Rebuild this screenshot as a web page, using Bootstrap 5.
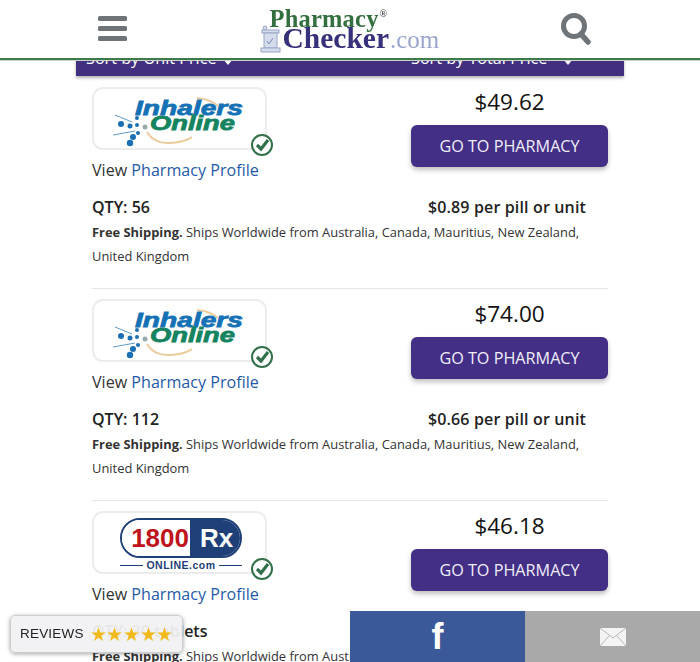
<!DOCTYPE html>
<html lang="en">
<head>
    <meta charset="UTF-8">
    <meta name="viewport" content="width=device-width, initial-scale=1.0">
    <title>PharmacyChecker - Prices</title>
    <link rel="stylesheet" href="https://cdn.jsdelivr.net/npm/bootstrap@5.3.0/dist/css/bootstrap.min.css">
    <style>
        html, body { height: 662px; overflow: hidden; }
        body { font-family: "Open Sans", sans-serif; color: #222; background: #fff; }

        /* Header */
        .pc-header { height: 60px; background: #fff; border-bottom: 2px solid #3f7a4c; box-shadow: 0 1px 0 #c9d3c9; z-index: 20; padding: 0 108px 0 98px; }
        .pc-logo { width: 180px; height: 52px; margin-top: 4px; margin-left: 12px; position: relative; font-family: "Liberation Serif", serif; line-height: 1; }
        .pc-logo-top { position: absolute; left: 10px; top: 3px; font-size: 24.5px; font-weight: 700; color: #34703f; letter-spacing: .2px; white-space: nowrap; }
        .pc-logo-top sup { font-size: 10px; color: #555; top: -10px; position: relative; vertical-align: baseline; margin-left: 1px; }
        .pc-logo-bottom { position: absolute; left: 23px; top: 20px; font-size: 29.5px; font-weight: 700; color: #37307a; white-space: nowrap; }
        .pc-logo-bottom span { font-weight: 400; font-size: 25px; color: #9aa5cd; margin-left: 1px; }
        .pc-mortar { position: absolute; left: 0; top: 21px; }

        /* Sort bar */
        .pc-main { padding-top: 40px; }
        .pc-sort { height: 36px; margin: 0 76px; background: #432f7f; color: #fff; font-size: 16.2px; box-shadow: 0 2px 3px rgba(0,0,0,.3); padding-left: 10px; line-height: 37px; }
        .pc-sort-a { width: 325px; }
        .pc-caret { display: inline-block; border: 5px solid transparent; border-top: 6px solid #fff; border-bottom: 0; margin-left: 6px; vertical-align: -1px; }

        /* Offers */
        .pc-offers { margin: 0 92px; width: 516px; padding-top: 11px; }
        .pc-offer { height: 202px; margin-bottom: 10px; border-bottom: 1px solid #e6e6e6; }
        .pc-offer:last-child { border-bottom: 0; }
        .pc-left { width: 182px; }
        .pc-logobox { width: 175px; height: 63px; border: 2px solid #ececec; border-radius: 11px; background: #fff; position: relative; overflow: visible; }
        .pc-logoart { position: absolute; left: -2px; top: -2px; }
        .pc-check { position: absolute; right: -9px; bottom: -9px; }
        .pc-view { font-size: 16.1px; line-height: 24px; margin-top: 8px; color: #333; white-space: nowrap; }
        .pc-view a { color: #1f5aa8; text-decoration: none; }
        .pc-right { width: 197px; text-align: center; }
        .pc-price { font-size: 22.5px; font-weight: 500; color: #111; line-height: 30px; margin-bottom: 8px; }
        .pc-btn { width: 197px; height: 42px; background: #432f85; color: #f1eefc; border: 0; border-radius: 6px; font-size: 16.2px; box-shadow: 0 3px 5px rgba(0,0,0,.25); padding: 0; }
        .pc-qty { font-size: 16px; font-weight: 600; color: #222; margin-top: 13px; line-height: 24px; padding-right: 22px; }
        .pc-unit { letter-spacing: .15px; }
        .pc-ship { font-size: 12.9px; line-height: 24px; color: #333; margin-top: 1px; }
        .pc-ship b { font-weight: 700; }

        /* Logo that is drawn with markup */
        .pc-rx-pill { position: absolute; left: 26px; top: 5px; width: 122px; height: 40px; border: 2px solid #1e3f78; border-radius: 20px; overflow: hidden; display: flex; font-family: "Liberation Sans", sans-serif; font-weight: 700; line-height: 36px; }
        .pc-rx-num { width: 68px; font-size: 26px; color: #c0141c; text-align: right; padding-right: 1px; background: #fff; }
        .pc-rx-txt { flex: 1; font-size: 26px; color: #fff; background: #1e3f78; padding-left: 10px; }
        .pc-rx-sub { position: absolute; left: 26px; width: 122px; top: 46px; display: flex; align-items: center; gap: 3px; font-family: "Liberation Sans", sans-serif; font-weight: 700; font-size: 10.5px; color: #1e3f78; line-height: 12px; letter-spacing: .5px; white-space: nowrap; }
        .pc-rx-sub i { flex: 1; height: 1px; background: #1e3f78; }

        /* Overlays at the bottom */
        .pc-reviews { left: 10px; top: 615px; width: 173px; height: 38px; background: rgba(241,241,243,.95); border: 1px solid #ccc; border-radius: 5px; box-shadow: 0 1px 4px rgba(0,0,0,.35); font-family: "Liberation Sans", sans-serif; font-size: 13.5px; color: #222; z-index: 30; padding-left: 9px; letter-spacing: .2px; }
        .pc-stars { color: #f1b91c; font-size: 19px; letter-spacing: -.3px; margin-left: 6px; line-height: 1; }
        .pc-share { left: 350px; top: 611px; width: 350px; height: 51px; z-index: 25; }
        .pc-fb { width: 175px; background: #3b5998; color: #fff; font-family: "Liberation Sans", sans-serif; font-weight: 700; font-size: 36px; }
        .pc-mail { width: 175px; background: #a9a9a9; }
    </style>
</head>
<body>

    <header class="pc-header position-fixed top-0 start-0 end-0 d-flex justify-content-between align-items-start">
        <svg class="mt-3" width="29" height="25" viewBox="0 0 29 25" aria-label="Menu"><g fill="#6f7478"><rect y="0" width="29" height="5" rx="1.5"/><rect y="10" width="29" height="5" rx="1.5"/><rect y="20" width="29" height="5" rx="1.5"/></g></svg>
        <div class="pc-logo">
            <svg class="pc-mortar" width="21" height="28" viewBox="0 -4 21 28"><g fill="#d5dcec" stroke="#98a5c8" stroke-width="1"><circle cx="5" cy="-1" r="2"/><rect x="2" y="1" width="17" height="3"/><rect x="4" y="4" width="13" height="15"/><rect x="1" y="19" width="19" height="4"/></g><path d="M7 12l2 3 4-6" fill="none" stroke="#7f8db5" stroke-width="1"/></svg>
            <div class="pc-logo-top">Pharmacy<sup>®</sup></div>
            <div class="pc-logo-bottom">Checker<span>.com</span></div>
        </div>
        <svg style="margin-top:13px" width="32" height="32" viewBox="0 0 32 32" aria-label="Search"><circle cx="14" cy="13" r="10.5" fill="none" stroke="#6f7478" stroke-width="5"/><path d="M21 21l7 8" stroke="#6f7478" stroke-width="5.5" stroke-linecap="round"/></svg>
    </header>

    <main class="pc-main">
        <div class="pc-sort d-flex">
            <div class="pc-sort-a">Sort by Unit Price<span class="pc-caret"></span></div>
            <div>Sort by Total Price<span class="pc-caret ms-3"></span></div>
        </div>

        <div class="pc-offers" id="offers"></div>
    </main>

    <div class="pc-reviews position-fixed d-flex align-items-center">REVIEWS<span class="pc-stars">★★★★★</span></div>

    <div class="pc-share position-fixed d-flex">
        <div class="pc-fb d-flex align-items-center justify-content-center">f</div>
        <div class="pc-mail d-flex align-items-center justify-content-center">
            <svg width="26" height="18" viewBox="0 0 26 18" aria-label="Email"><rect width="26" height="18" fill="#f4f4f4"/><path d="M0 0l13 10L26 0M0 18l9-10M26 18l-9-10" fill="none" stroke="#b5b5b5" stroke-width="1"/></svg>
        </div>
    </div>

    <script>
        const inhalers = `
            <svg class="pc-logoart" width="175" height="63" viewBox="0 0 175 63">
                <path d="M55 45Q62 57 78 56T100 50M105 11Q118 12 126 19" fill="none" stroke="#eccb9c" stroke-width="2"/>
                <g fill="#1b6fb4"><circle cx="29" cy="37" r="3"/><circle cx="38" cy="39" r="2.5"/><circle cx="45" cy="38" r="2"/><circle cx="45" cy="31" r="2"/><circle cx="46" cy="46" r="2"/><circle cx="41" cy="50" r="3"/><circle cx="38" cy="56" r="3.2"/></g>
                <circle cx="53" cy="40" r="2.5" fill="#9aa" />
                <path d="M23 28L40 35M21 48L43 44" stroke="#5d9cc9" stroke-width="1"/>
                <text x="43" y="28" textLength="108" lengthAdjust="spacingAndGlyphs" font-family="Liberation Sans" font-weight="700" font-style="italic" font-size="21" fill="#1571b5" stroke="#1571b5" stroke-width=".8">Inhalers</text>
                <text x="58" y="43" textLength="85" lengthAdjust="spacingAndGlyphs" font-family="Liberation Sans" font-weight="700" font-style="italic" font-size="21" fill="#14835f" stroke="#14835f" stroke-width=".8">Online</text>
            </svg>`;
        const rx = `
            <div class="pc-rx-pill"><div class="pc-rx-num">1800</div><div class="pc-rx-txt">Rx</div></div>
            <div class="pc-rx-sub"><i></i>ONLINE.com<i></i></div>`;

        const offers = [
            { logo: inhalers, price: '$49.62', qty: 'QTY: 56', unit: '$0.89' },
            { logo: inhalers, price: '$74.00', qty: 'QTY: 112', unit: '$0.66' },
            { logo: rx, price: '$46.18', qty: 'QTY: 30 tablets', unit: '$1.54' }
        ];

        document.getElementById('offers').innerHTML = offers.map(o => `
            <div class="pc-offer">
                <div class="d-flex justify-content-between">
                    <div class="pc-left">
                        <div class="pc-logobox">${o.logo}
                            <svg class="pc-check" width="24" height="24" viewBox="0 0 24 24"><circle cx="12" cy="12" r="10" fill="#fff" stroke="#33704a" stroke-width="2"/><path d="M7 12l4 4 7-9" fill="none" stroke="#33704a" stroke-width="3.2"/></svg>
                        </div>
                        <div class="pc-view">View <a href="#">Pharmacy Profile</a></div>
                    </div>
                    <div class="pc-right">
                        <div class="pc-price">${o.price}</div>
                        <button class="pc-btn">GO TO PHARMACY</button>
                    </div>
                </div>
                <div class="pc-qty d-flex justify-content-between"><span>${o.qty}</span><span class="pc-unit">${o.unit} per pill or unit</span></div>
                <div class="pc-ship"><b>Free Shipping.</b> Ships Worldwide from Australia, Canada, Mauritius, New Zealand, United Kingdom</div>
            </div>`).join('');
    </script>
    <script src="https://cdn.jsdelivr.net/npm/bootstrap@5.3.0/dist/js/bootstrap.bundle.min.js"></script>
</body>
</html>
